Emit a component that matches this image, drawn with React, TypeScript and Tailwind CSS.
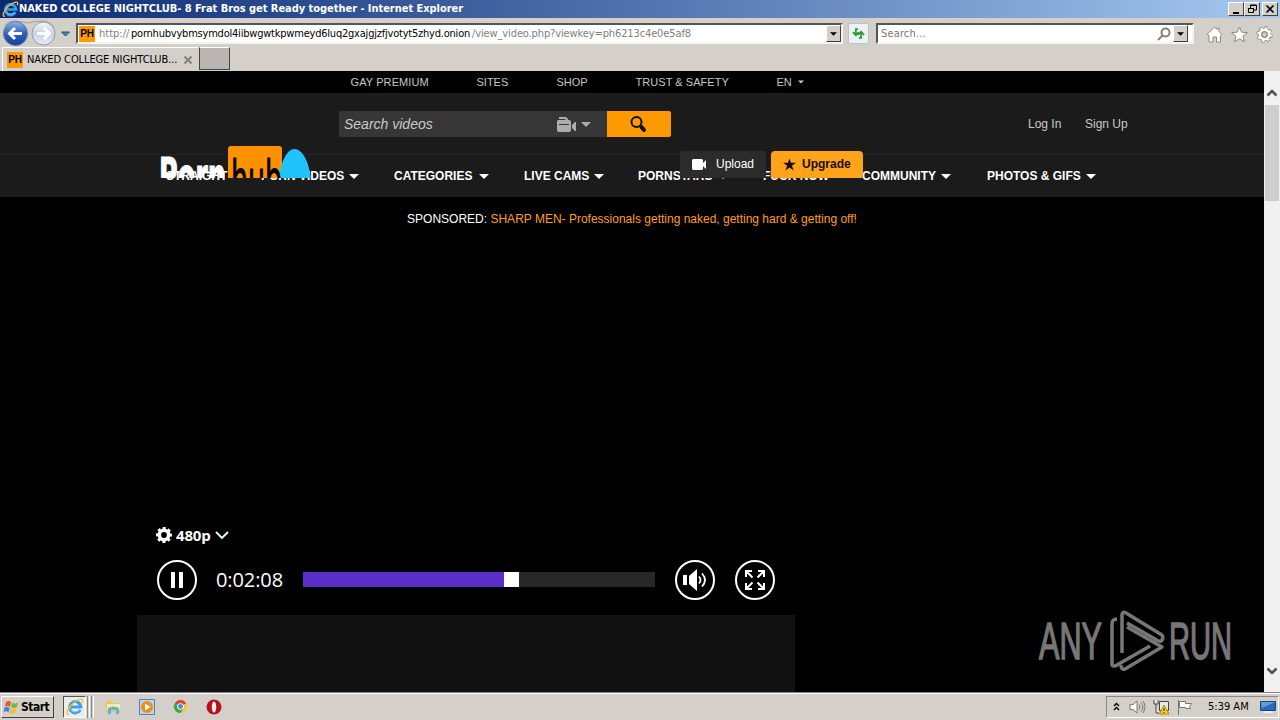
const ui = "font-[DejaVu_Sans_Condensed,Tahoma,sans-serif]";
const page = "font-[Liberation_Sans,Arial,sans-serif]";

const navItems = [
  { label: "STRAIGHT", caret: false, width: "w-[60px]" },
  { label: "PORN VIDEOS", caret: true, width: "w-[83px]" },
  { label: "CATEGORIES", caret: true, width: "w-[80px]" },
  { label: "LIVE CAMS", caret: true, width: "w-[65px]" },
  { label: "PORNSTARS", caret: true, width: "w-[75px]" },
  { label: "FUCK NOW", caret: false, width: "w-[66px]" },
  { label: "COMMUNITY", caret: true, width: "w-[74px]" },
  { label: "PHOTOS & GIFS", caret: true, width: "w-[94px]" },
];

function Caret({ className }: { className: string }) {
  return (
    <svg viewBox="0 0 10 5" className={className} fill="currentColor">
      <path d="M0 0h10L5 5z" />
    </svg>
  );
}

function IeIcon({ size }: { size: number }) {
  return (
    <svg width={size} height={size} viewBox="0 0 20 20" fill="none" className="shrink-0">
      <path d="M15.8 13.2A6.3 6.3 0 1 1 16.5 10H5.5" stroke="#3a9fe6" strokeWidth="3.2" />
      <path d="M14.6 13.4A5.6 5.6 0 0 1 5 12" stroke="#8fd2f8" strokeWidth="1" />
      <path d="M3.5 18C-1 19 2 10 9 5s11-5 9 0" stroke="#f2c428" strokeWidth="1.6" />
    </svg>
  );
}

function PhIcon() {
  return (
    <span className="flex h-4 w-4 shrink-0 items-center justify-center bg-[#ff9900] font-[Liberation_Sans,sans-serif] text-[10px] leading-4 font-bold tracking-[-0.3px] text-black">
      PH
    </span>
  );
}

function TitleBar() {
  const button = "flex h-[14px] items-center justify-center border border-t-white border-l-white border-r-[#404040] border-b-[#404040] bg-[#d4cfc9]";
  return (
    <div className="flex h-[18px] shrink-0 items-center bg-linear-to-r from-[#0a2a72] via-[#5273ae] to-[#a6caf0] pr-[2px] pl-[2px]">
      <IeIcon size={17} />
      <span className={`${ui} w-[445px] text-[11px] leading-[18px] font-bold tracking-[-0.04px] whitespace-nowrap text-white`}>
        NAKED COLLEGE NIGHTCLUB- 8 Frat Bros get Ready together - Internet Explorer
      </span>
      <div className="ml-auto flex">
        <div className={`${button} w-4`}>
          <svg width="12" height="10" viewBox="0 0 12 10"><path d="M3 8h6v2H3z" /></svg>
        </div>
        <div className={`${button} w-4`}>
          <svg width="10" height="10" viewBox="0 0 10 10" fill="none" stroke="#000">
            <path d="M3.5 4V1h6v5H7M3 1.5h7M1.5 4.5h5v4h-5zM1 4.5h6" />
          </svg>
        </div>
        <div className={`${button} ml-[2px] w-4`}>
          <svg width="10" height="10" viewBox="0 0 10 10" stroke="#000" strokeWidth="1.6"><path d="M1.5 1.5l7 7M8.5 1.5l-7 7" /></svg>
        </div>
      </div>
    </div>
  );
}

function NavButtons() {
  return (
    <svg width="76" height="28" viewBox="0 0 76 28" fill="none" className="shrink-0">
      <defs>
        <linearGradient id="back" x1="0" y1="0" x2="0" y2="1">
          <stop offset="0" stopColor="#8fb4e4" />
          <stop offset=".5" stopColor="#2a64b8" />
          <stop offset="1" stopColor="#173f91" />
        </linearGradient>
        <linearGradient id="fwd" x1="0" y1="0" x2="0" y2="1">
          <stop offset="0" stopColor="#f4f7fb" />
          <stop offset=".5" stopColor="#c8d2de" />
          <stop offset="1" stopColor="#e8edf3" />
        </linearGradient>
      </defs>
      <path d="M4 7Q8 2 15 2Q24 3 29 4Q34 2 43 2Q51 3 54 8" stroke="#a5a19c" />
      <circle cx="15.500" cy="14.500" r="12" fill="url(#back)" stroke="#5c7cae" />
      <path d="M22 14.500H10m5-5.500l-5.500 5.500 5.500 5.500" stroke="#fff" strokeWidth="3" />
      <circle cx="43.500" cy="14.500" r="11.500" fill="url(#fwd)" stroke="#8d98a8" />
      <path d="M37 14.500h12m-5-5.500l5.500 5.500-5.500 5.500" stroke="#fff" strokeWidth="3" />
      <path d="M61.500 13h8l-4 4z" fill="#3a86c4" stroke="#24537f" />
    </svg>
  );
}

function DropButton() {
  return (
    <div className="flex h-[17px] w-[15px] items-center justify-center border border-t-white border-l-white border-r-[#404040] border-b-[#404040] bg-[#d4cfc9] text-black">
      <Caret className="h-1 w-[7px]" />
    </div>
  );
}

function AddressRow() {
  const box = "flex h-[21px] items-center border-2 border-t-[#555] border-l-[#555] border-r-[#f5f3f0] border-b-[#f5f3f0] bg-white";
  return (
    <div className="flex h-[29px] shrink-0 items-start pt-px">
      <NavButtons />
      <div className={`${box} mt-[4px] w-[767px]`}>
        <span className="ml-px"><PhIcon /></span>
        <div className={`${ui} ml-[4px] flex text-[11px] leading-4 whitespace-nowrap text-[#808080]`}>
          <span className="w-[32px]">http://</span>
          <span className="w-[341px] tracking-[-0.215px] text-black">pornhubvybmsymdol4iibwgwtkpwmeyd6luq2gxajgjzfjvotyt5zhyd.onion</span>
          <span className="tracking-[-0.12px]">/view_video.php?viewkey=ph6213c4e0e5af8</span>
        </div>
        <div className="ml-auto"><DropButton /></div>
      </div>
      <div className="mt-[4px] ml-[5px] flex h-[21px] w-[21px] items-center justify-center rounded-[2px] border border-[#b9c3cc] bg-[#eaf2f5]">
        <svg width="15" height="13" viewBox="0 0 17 15" fill="none" stroke="#2f9a35" strokeWidth="2">
          <path d="M8 2.500H5.500v6M2 6l3.500 3.500L9 6M9 12.500h2.500v-6M8 9l3.500-3.500L15 9" />
        </svg>
      </div>
      <div className={`${box} mt-[4px] ml-[7px] w-[318px]`}>
        <span className={`${ui} ml-[3px] text-[11px] leading-4 tracking-[0.15px] text-[#777]`}>Search...</span>
        <svg width="14" height="14" viewBox="0 0 14 14" fill="none" stroke="#85817f" strokeWidth="2" className="ml-auto">
          <circle cx="8.500" cy="5.500" r="4" /><path d="M5.500 8.500L1 13" />
        </svg>
        <div className="mr-[4px] ml-[2px]"><DropButton /></div>
      </div>
      <div className="mt-[7px] ml-[12px] flex gap-[8px]">
        <svg width="17" height="17" viewBox="0 0 17 17" fill="#fff" stroke="#8b8783"><path d="M1 8.500L8.500 1l2.500 2.500V2h2v3.500l3 3-1.500 1V16h-4v-5H7v5H3V9.500z" /></svg>
        <svg width="17" height="17" viewBox="0 0 17 17" fill="#fff" stroke="#8b8783"><path d="M8.500 1l2.200 5.200 5.600.4-4.300 3.600 1.400 5.500-4.900-3-4.900 3L5 10.200.700 6.600l5.600-.4z" /></svg>
        <svg width="17" height="17" viewBox="0 0 17 17" fill="none">
          <circle cx="8.500" cy="8.500" r="6.800" stroke="#8b8783" strokeWidth="2.800" strokeDasharray="3.100 2.240" />
          <circle cx="8.500" cy="8.500" r="4.600" stroke="#8b8783" strokeWidth="4.400" />
          <circle cx="8.500" cy="8.500" r="6.200" stroke="#fff" strokeWidth="2.400" strokeDasharray="2.200 2.670" />
          <circle cx="8.500" cy="8.500" r="4.600" stroke="#fff" strokeWidth="2.600" />
          <circle cx="8.500" cy="8.500" r="2.800" stroke="#8b8783" />
        </svg>
      </div>
    </div>
  );
}

function TabRow() {
  return (
    <div className="flex h-[24px] shrink-0 items-start pl-[2px]">
      <div className="flex h-[24px] w-[196px] items-center border-t border-l border-white pl-[4px]">
        <PhIcon />
        <span className={`${ui} ml-[4px] w-[153px] text-[11px] leading-4 tracking-[-0.1px] whitespace-nowrap text-black`}>NAKED COLLEGE NIGHTCLUB...</span>
        <svg width="8" height="8" viewBox="0 0 8 8" stroke="#85817f" strokeWidth="2" className="ml-[4px]"><path d="M.5.5l7 7M7.500.5l-7 7" /></svg>
      </div>
      <div className="ml-[1px] h-[23px] w-[31px] border-[1.500px] border-t-white border-l-[#444] border-r-[#444] border-b-[#444] bg-[#bab5b1]" />
    </div>
  );
}

function Logo() {
  return (
    <svg width="152" height="33" viewBox="0 0 152 33" className="absolute top-[74px] left-[160px]" fontFamily="'DejaVu Sans Condensed', sans-serif" fontWeight="bold">
      <rect x="68" y="1" width="54" height="40" rx="3" fill="#ff9000" />
      <path d="M119 33C121 16 127 4 134.500 4S149 16 150.500 33z" fill="#1fc4ff" />
      <text x="-1" y="48" fontSize="50" fill="#fff" stroke="#fff" textLength="67" lengthAdjust="spacingAndGlyphs">Porn</text>
      <text x="71" y="52" fontSize="51" fill="#000" fontWeight="normal" stroke="#000" textLength="51" lengthAdjust="spacingAndGlyphs">hub</text>
    </svg>
  );
}

function SiteHeader() {
  return (
    <header className="relative">
      <div className="grid h-[22px] grid-cols-[126px_80px_79px_141px_auto] pl-[350.5px] text-[11px] leading-[22px] text-[#c6c6c6]">
        <span className="tracking-[0.1px]">GAY PREMIUM</span>
        <span>SITES</span>
        <span>SHOP</span>
        <span className="tracking-[0.05px]">TRUST &amp; SAFETY</span>
        <span className="flex items-center gap-[6px]">EN <Caret className="h-1 w-[6px]" /></span>
      </div>
      <div className="flex h-[62px] items-start border-b border-[#242424] bg-[#1b1b1b] pt-[18px] pl-[339px]">
        <div className="flex h-[26px] w-[268px] items-center rounded-l-[2px] bg-[#363636] pr-[16px] pl-[5px] text-[#adadad]">
          <span className="text-[14px] text-[#cacaca] italic">Search videos</span>
          <svg width="21" height="17" viewBox="0 0 21 17" fill="currentColor" className="ml-auto">
            <path d="M3 1h7l2 2v1h-2L9 3H3z" />
            <path fillRule="evenodd" d="M2 4h11q2 0 2 2v8q0 2-2 2H3q-2 0-2-2V6q0-2 1-2zm1 4v1h10V8z" />
            <path d="M16 9l3-3h1v9h-1l-3-3z" />
          </svg>
          <Caret className="ml-[4px] h-[5px] w-[10px]" />
        </div>
        <div className="flex h-[26px] w-[64px] items-center justify-center rounded-r-[2px] bg-[#ff9900]">
          <svg width="18" height="18" viewBox="0 0 18 18" fill="none" stroke="#111" className="-ml-[2px]">
            <circle cx="7.500" cy="7" r="5" strokeWidth="2" /><path d="M11 11l2 2" strokeWidth="2" /><path d="M12.500 12l2.500 3" strokeWidth="4" strokeLinecap="round" />
          </svg>
        </div>
        <div className="ml-[357px] flex text-[12px] leading-[26px] text-[#cacaca]">
          <span className="w-[57px]">Log In</span>
          <span>Sign Up</span>
        </div>
      </div>
      <nav className="grid h-[42px] grid-cols-[95px_133px_130px_114px_125px_99px_125px_auto] bg-[#1b1b1b] pl-[166px] text-[12px] leading-[42px] font-bold whitespace-nowrap text-white">
        {navItems.map((item) => (
          <span key={item.label} className="flex items-center">
            <span className={item.width}>{item.label}</span>
            {item.caret && <Caret className="ml-[5px] h-[5px] w-[10px]" />}
          </span>
        ))}
      </nav>
      <Logo />
      <div className="absolute top-[80px] left-[680px] flex h-[27px] gap-[5px] text-[12px] leading-[27px]">
        <div className="flex w-[86px] items-center rounded-t-[3px] bg-[#2b2b2b] pl-[12px] text-white">
          <svg width="15" height="11" viewBox="0 0 15 11" fill="currentColor"><path d="M1 0h9l1 1v3l3-3v9l-3-3v3l-1 1H1l-1-1V1z" /></svg>
          <span className="ml-[9px]">Upload</span>
        </div>
        <div className="flex w-[92px] items-center rounded-t-[4px] rounded-b-[2px] bg-[#ffa31a] pb-[1px] pl-[12px] font-bold text-[#1b0d00]">
          <svg width="13" height="13" viewBox="0 0 15 14" fill="currentColor"><path d="M7.500 0l1.700 5H15l-4.700 3.300L12.300 14 7.500 10.400 2.700 14l2-5.700L0 5h5.800z" /></svg>
          <span className="ml-[6px]">Upgrade</span>
        </div>
      </div>
    </header>
  );
}

function RoundButton({ children }: { children: React.ReactNode }) {
  return (
    <div className="flex h-10 w-10 shrink-0 items-center justify-center rounded-full border-2 border-white text-white">{children}</div>
  );
}

function Player() {
  return (
    <section className="mt-[299px] pl-[156px]">
      <div className="flex h-[20px] items-center text-white">
        <svg width="16" height="16" viewBox="0 0 16 16" fill="none" stroke="currentColor">
          <circle cx="8" cy="8" r="4.700" strokeWidth="3.600" />
          <circle cx="8" cy="8" r="6.700" strokeWidth="2.600" strokeDasharray="3 2.260" strokeDashoffset="1.500" />
        </svg>
        <span className="ml-[4px] w-[36px] font-[Open_Sans,sans-serif] text-[15px] leading-5 font-bold tracking-[-0.2px]">480p</span>
        <svg width="14" height="9" viewBox="0 0 14 9" fill="none" stroke="currentColor" strokeWidth="1.800" className="ml-[3px]"><path d="M1 1l6 6 6-6" /></svg>
      </div>
      <div className="mt-[15px] ml-px flex h-10 items-center">
        <RoundButton>
          <svg width="12" height="16" viewBox="0 0 12 16" fill="currentColor"><path d="M0 0h4v16H0zM8 0h4v16H8z" /></svg>
        </RoundButton>
        <span className="ml-[19px] w-[87px] font-[Open_Sans,sans-serif] text-[20px] leading-10 tracking-[-0.1px] text-white">0:02:08</span>
        <div className="mb-px flex h-[15px] w-[352px] bg-[#282828]">
          <div className="w-[201px] bg-[#5d2fc9]" />
          <div className="w-[15px] bg-white" />
        </div>
        <div className="ml-[20px] flex gap-[20px]">
          <RoundButton>
            <svg width="24" height="22" viewBox="0 0 24 22" fill="none" stroke="currentColor" strokeWidth="1.800">
              <path d="M0 6h4v10H0zM6 7l8-7v22l-8-7z" fill="currentColor" stroke="none" />
              <path d="M16 7.500q3 3.500 0 7M19 4.500q6 6.500 0 13" />
            </svg>
          </RoundButton>
          <RoundButton>
            <svg width="22" height="22" viewBox="0 0 22 22" fill="none" stroke="currentColor" strokeWidth="2">
              <path d="M2 8V2h6M2 2l6.500 6.500M14 2h6v6M20 2l-6.500 6.500M2 14v6h6M2 20l6.500-6.500M20 14v6h-6M20 20l-6.500-6.500" />
            </svg>
          </RoundButton>
        </div>
      </div>
    </section>
  );
}

function Watermark() {
  return (
    <svg width="196" height="66" viewBox="0 0 196 66" className="absolute top-[538px] left-[1038px]" fill="none" fontFamily="'Liberation Sans Narrow', 'Liberation Sans', sans-serif">
      <text x="1" y="50" fontSize="51" fill="#777" stroke="#777" strokeWidth="1.500" textLength="63" lengthAdjust="spacingAndGlyphs">ANY</text>
      <text x="131" y="50" fontSize="51" fill="#777" stroke="#777" strokeWidth="1.500" textLength="63" lengthAdjust="spacingAndGlyphs">RUN</text>
      <g stroke="#777" strokeWidth="3.500" strokeLinejoin="round">
        <path d="M84 44V6q0-4 4-2l36 22q2 4-1 6-3 1-6-2L89 14" />
        <path d="M79 10q-5 0-5 5v41q2 2 5 0l33-19" />
        <path d="M89 18l35 20-37 22q-4 1-4-4" />
      </g>
    </svg>
  );
}

function Scrollbar() {
  return (
    <div className="flex w-4 shrink-0 flex-col items-center bg-[#f0f0f0]">
      <svg width="12" height="8" viewBox="0 0 12 8" fill="none" stroke="#505050" strokeWidth="2.500" className="mt-[18px] shrink-0"><path d="M1.500 6.500L6 2l4.500 4.500" /></svg>
      <div className="mt-[8px] h-[96px] w-[14px] bg-[#cdcdcd]" />
      <svg width="12" height="8" viewBox="0 0 12 8" fill="none" stroke="#505050" strokeWidth="2.500" className="mt-auto mb-[17px] shrink-0"><path d="M1.500 1.500L6 6l4.500-4.500" /></svg>
    </div>
  );
}

function Taskbar() {
  return (
    <div className="flex h-[28px] shrink-0 items-center border-t border-[#808080] bg-[#d4cfc9] pr-[1px] pb-[2px] pl-[1px] shadow-[inset_0_1px_0_#fff]">
      <div className="mt-[2px] flex h-[22px] w-[53px] items-center border border-t-white border-l-white border-r-[#404040] border-b-[#404040] pl-[1px]">
        <svg width="16" height="16" viewBox="0 0 16 16">
          <path d="M3 3q3-2 5 0L7 8Q5 6 2 7.500z" fill="#e8592a" />
          <path d="M9 3.500q3 2 6 0L14 8q-3 2-6 0z" fill="#78b83a" />
          <path d="M1.500 8.500q3-1.500 5 .5l-1 4.500q-2-2-5-.5z" fill="#3d8ad6" />
          <path d="M7.500 9.500q3 1.500 6 0l-1 4q-3 2-6 0z" fill="#f5bd28" />
        </svg>
        <span className={`${ui} ml-[2px] text-[12px] leading-5 font-bold tracking-[-0.5px] text-black`}>Start</span>
      </div>
      <div className="mt-[2px] ml-[9px] flex h-[22px] w-[23px] items-center justify-center border border-t-[#555] border-l-[#555] border-r-white border-b-white bg-[#eeece9]">
        <IeIcon size={18} />
      </div>
      <div className="mt-[2px] ml-[1px] h-[22px] w-[3px] border-r border-l border-r-white border-l-[#888]" />
      <div className="mt-[2px] ml-[1px] h-[22px] w-[3px] border-r border-l border-r-white border-l-[#888]" />
      <div className="mt-[2px] ml-[11px] flex items-center gap-[17px]">
        <svg width="17" height="16" viewBox="0 0 17 16">
          <path d="M1 2h6l1 2h7v9H1z" fill="#edc55a" /><path d="M2 5h13v6H2z" fill="#fbeaa5" />
          <path d="M3 9q5-3 11 0v6h-3v-4H6v4H3z" fill="#59b5dc" />
        </svg>
        <svg width="16" height="16" viewBox="0 0 16 16">
          <path d="M.5.5h15v15H.5z" fill="#b9d5ef" stroke="#4d84bd" />
          <circle cx="8" cy="8" r="6" fill="#f28c18" /><path d="M6 4.500L11.500 8 6 11.500z" fill="#fff" />
        </svg>
        <svg width="15" height="15" viewBox="0 0 16 16" className="ml-px">
          <circle cx="8" cy="8" r="7" fill="#f6c928" />
          <path d="M8 8L1.900 4.500A7 7 0 0 1 14.100 4.500z" fill="#df4432" />
          <path d="M8 8L1.900 4.500A7 7 0 0 0 8 15l3-5z" fill="#38a352" />
          <circle cx="8" cy="8" r="3.500" fill="#fff" /><circle cx="8" cy="8" r="2.600" fill="#4388e8" />
        </svg>
        <svg width="16" height="16" viewBox="0 0 16 16" className="ml-px">
          <circle cx="8" cy="8" r="7.500" fill="#b5121b" /><ellipse cx="8" cy="8" rx="2.200" ry="5.500" fill="#eee" />
        </svg>
      </div>
      <div className="mt-[2px] ml-auto flex h-[22px] w-[173px] items-center border border-t-[#888] border-l-[#888] border-r-white border-b-white pl-[6px]">
        <svg width="7" height="9" viewBox="0 0 7 9" fill="none" stroke="#000" strokeWidth="1.400"><path d="M1 4l2.500-2.500L6 4M1 8l2.500-2.500L6 8" /></svg>
        <svg width="17" height="16" viewBox="0 0 17 16" fill="#fff" stroke="#777" className="ml-[9px]">
          <path d="M1 5.500h3L8 2v12l-4-3.500H1z" /><path d="M10 5.500q2 2.500 0 5M12 3.500q4 4.500 0 9M14 2q4 6 0 12" fill="none" />
        </svg>
        <svg width="17" height="16" viewBox="0 0 17 16" fill="none" stroke="#444" className="ml-[7px]">
          <path d="M1 1v4h4V1M3 5v9h3M6.500 2.500h9v9h-9z" fill="#e8e8e8" />
          <path d="M11 6l5 9H6.500z" fill="#ffd21f" stroke="#b58e00" /><path d="M11 9v3m0 1v1" stroke="#222" />
        </svg>
        <svg width="16" height="16" viewBox="0 0 16 16" fill="#fff" stroke="#777" className="ml-[7px]">
          <path d="M1.500 1v15M2.500 2.500h6v2h6l-2 3 1 2h-5v-1h-6z" />
        </svg>
        <span className={`${ui} ml-[15px] w-[42px] text-[11px] leading-4 whitespace-nowrap text-black`}>5:39 AM</span>
        <svg width="16" height="14" viewBox="0 0 16 14" className="ml-[10px]">
          <path d="M.5 1.500h15v9H.5z" fill="#2a69b8" stroke="#1b4479" /><path d="M1 2h14L2 8z" fill="#5d9ee0" /><path d="M4 11h8l1 2H3z" fill="#eee" />
        </svg>
      </div>
    </div>
  );
}

export default function App() {
  return (
    <div className="flex h-[720px] w-[1280px] flex-col overflow-hidden bg-[#d4cfc9]">
      <TitleBar />
      <AddressRow />
      <TabRow />
      <div className="flex h-[621px] shrink-0">
        <main className={`${page} relative flex w-[1264px] flex-col overflow-hidden bg-black`}>
          <SiteHeader />
          <p className="mt-[13px] h-[16px] text-center text-[12px] leading-[18px] text-white">
            SPONSORED: <span className="text-[#ff9f1a]">SHARP MEN- Professionals getting naked, getting hard &amp; getting off!</span>
          </p>
          <Player />
          <div className="mt-[15px] ml-[137px] w-[658px] flex-1 bg-[#111]" />
          <Watermark />
        </main>
        <Scrollbar />
      </div>
      <Taskbar />
    </div>
  );
}
